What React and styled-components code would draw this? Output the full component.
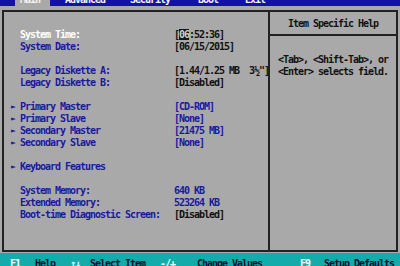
import React from "react";
import styled, { createGlobalStyle } from "styled-components";

const GRAY = "#a9a9a9";
const BLUE = "#1a1aa0";
const LINE = "#222222";
const CYAN = "#14abab";

const Global = createGlobalStyle`
  html, body {
    margin: 0;
    padding: 0;
    width: 400px;
    height: 266px;
    overflow: hidden;
    background: ${GRAY};
  }
  body {
    font-family: "DejaVu Sans Mono", "Liberation Mono", monospace;
    font-size: 10px;
    font-weight: bold;
    letter-spacing: -1.02px;
  }
`;

const Screen = styled.div`
  width: 400px;
  height: 266px;
  display: flex;
  flex-direction: column;
  overflow: hidden;
`;

const MenuBar = styled.div`
  height: 6px;
  flex: none;
  background: #1212aa;
  overflow: hidden;
`;

const MenuLine = styled.div`
  display: flex;
  height: 12px;
  line-height: 12px;
  margin-top: -6px;
  padding-left: 15px;
`;

const Tab = styled.span`
  color: #f4f4f4;
  margin-left: ${(p) => p.$gap || 0}px;
  padding: ${(p) => (p.$active ? "0 10px 0 5px" : "0")};
  background: ${(p) => (p.$active ? GRAY : "transparent")};
  white-space: pre;
`;

const Frame = styled.div`
  box-sizing: border-box;
  margin: 4px 2px 0;
  height: 242px;
  flex: none;
  border: 2px solid ${LINE};
  display: grid;
  grid-template-columns: 266px 1fr;
`;

const LeftPanel = styled.div`
  border-right: 2px solid ${LINE};
  padding: 17px 0 0 6px;
  display: flex;
  flex-direction: column;
`;

const Row = styled.div`
  display: grid;
  grid-template-columns: 10px 154px auto;
  height: 12px;
  line-height: 12px;
  white-space: pre;
`;

const Arrow = styled.span`
  color: ${BLUE};
  font-size: 8px;
  letter-spacing: 0;
  padding-left: 1px;
`;

const Label = styled.span`
  color: ${(p) => (p.$selected ? "#ffffff" : BLUE)};
`;

const Value = styled.span`
  color: ${(p) => (p.$tone === "blue" ? BLUE : "#111111")};
`;

const Cursor = styled.span`
  background: #141414;
  color: #cfcfcf;
`;

const RightPanel = styled.div`
  display: flex;
  flex-direction: column;
`;

const HelpHeader = styled.div`
  padding: 6px 0 4px;
  height: 12px;
  line-height: 12px;
  text-align: center;
  color: #111;
  border-bottom: 2px solid ${LINE};
`;

const HelpBody = styled.div`
  padding: 18px 0 0 8px;
  color: #111;
  line-height: 12px;
  white-space: pre;
`;

const BottomBar = styled.div`
  margin-top: 1px;
  flex: 1;
  background: ${CYAN};
  padding: 5px 0 0 10px;
  display: grid;
  grid-template-columns: 25px 35px 20px 70px 37px 103px 24px auto;
  line-height: 12px;
  white-space: pre;
  overflow: hidden;
`;

const Key = styled.span`
  color: ${(p) => (p.$key ? "#ffffff" : "#0c0c2c")};
`;

const rows = [
  { label: "System Time:", selected: true, value: "time" },
  { label: "System Date:", value: "[06/15/2015]" },
  null,
  { label: "Legacy Diskette A:", value: "[1.44/1.25 MB  3½\"]" },
  { label: "Legacy Diskette B:", value: "[Disabled]" },
  null,
  { label: "Primary Master", arrow: true, value: "[CD-ROM]", tone: "blue" },
  { label: "Primary Slave", arrow: true, value: "[None]", tone: "blue" },
  { label: "Secondary Master", arrow: true, value: "[21475 MB]", tone: "blue" },
  { label: "Secondary Slave", arrow: true, value: "[None]", tone: "blue" },
  null,
  { label: "Keyboard Features", arrow: true },
  null,
  { label: "System Memory:", value: "640 KB", tone: "blue" },
  { label: "Extended Memory:", value: "523264 KB", tone: "blue" },
  { label: "Boot-time Diagnostic Screen:", value: "[Disabled]" },
];

const footer = [
  ["F1", true],
  ["Help", false],
  ["↑↓", true],
  ["Select Item", false],
  ["-/+", true],
  ["Change Values", false],
  ["F9", true],
  ["Setup Defaults", false],
];

export default function App() {
  return (
    <Screen>
      <Global />
      <MenuBar>
        <MenuLine>
          <Tab $active>Main</Tab>
          <Tab $gap={15}>Advanced</Tab>
          <Tab $gap={25}>Security</Tab>
          <Tab $gap={28}>Boot</Tab>
          <Tab $gap={27}>Exit</Tab>
        </MenuLine>
      </MenuBar>
      <Frame>
        <LeftPanel>
          {rows.map((r, i) =>
            r ? (
              <Row key={i}>
                <Arrow>{r.arrow ? "►" : ""}</Arrow>
                <Label $selected={r.selected}>{r.label}</Label>
                {r.value === "time" ? (
                  <Value>
                    [<Cursor>06</Cursor>:52:36]
                  </Value>
                ) : (
                  <Value $tone={r.tone}>{r.value || ""}</Value>
                )}
              </Row>
            ) : (
              <Row key={i} />
            )
          )}
        </LeftPanel>
        <RightPanel>
          <HelpHeader>Item Specific Help</HelpHeader>
          <HelpBody>
            {"<Tab>, <Shift-Tab>, or\n<Enter> selects field."}
          </HelpBody>
        </RightPanel>
      </Frame>
      <BottomBar>
        {footer.map(([t, k], i) => (
          <Key key={i} $key={k}>
            {t}
          </Key>
        ))}
      </BottomBar>
    </Screen>
  );
}
